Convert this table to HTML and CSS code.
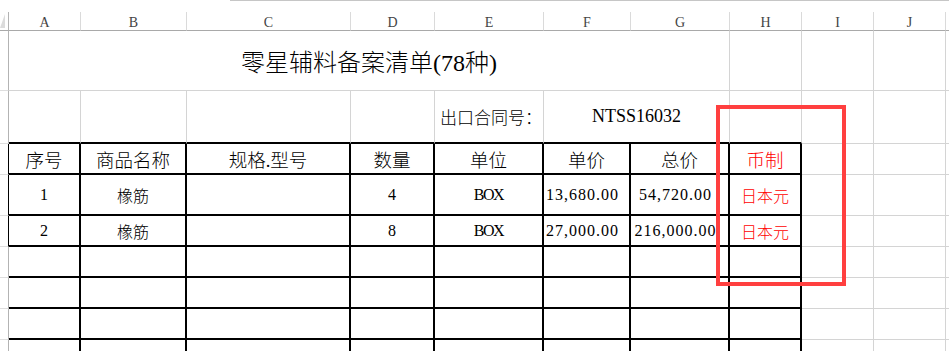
FILE: index.html
```html
<!DOCTYPE html>
<html lang="zh-CN">
<head>
<meta charset="utf-8">
<title>零星辅料备案清单</title>
<link rel="stylesheet" href="styles.css">
</head>
<body>
<div class="topbar"><div class="topbar-gap"></div><div class="topbar-edge"></div></div>
<div class="sheet">
  <!-- column letters -->
  <div class="corner"><span class="corner-tri"></span></div>
  <div class="colhead">A</div>
  <div class="colhead">B</div>
  <div class="colhead">C</div>
  <div class="colhead">D</div>
  <div class="colhead">E</div>
  <div class="colhead">F</div>
  <div class="colhead">G</div>
  <div class="colhead">H</div>
  <div class="colhead">I</div>
  <div class="colhead">J</div>
  <div class="colhead last"></div>

  <!-- row 1: title -->
  <div class="rowhead"></div>
  <div class="cell title">零星辅料备案清单(78种)</div>
  <div class="cell"></div>
  <div class="cell"></div>
  <div class="cell"></div>
  <div class="cell last"></div>

  <!-- row 2: contract number -->
  <div class="rowhead"></div>
  <div class="cell top-edge"></div>
  <div class="cell top-edge"></div>
  <div class="cell top-edge"></div>
  <div class="cell top-edge"></div>
  <div class="cell top-edge label">出口合同号：</div>
  <div class="cell top-edge pair contract">NTSS16032</div>
  <div class="cell top-edge"></div>
  <div class="cell"></div>
  <div class="cell"></div>
  <div class="cell last"></div>

  <!-- row 3: table header -->
  <div class="rowhead dark"></div>
  <div class="cell tb head">序号</div>
  <div class="cell tb head">商品名称</div>
  <div class="cell tb head">规格.型号</div>
  <div class="cell tb head">数量</div>
  <div class="cell tb head">单位</div>
  <div class="cell tb head">单价</div>
  <div class="cell tb head">总价</div>
  <div class="cell tb head red">币制</div>
  <div class="cell"></div>
  <div class="cell"></div>
  <div class="cell last"></div>

  <!-- row 4 -->
  <div class="rowhead dark"></div>
  <div class="cell tb data">1</div>
  <div class="cell tb data">橡筋</div>
  <div class="cell tb data"></div>
  <div class="cell tb data">4</div>
  <div class="cell tb data unit">BOX</div>
  <div class="cell tb data num">13,680.00</div>
  <div class="cell tb data num">54,720.00</div>
  <div class="cell tb data red">日本元</div>
  <div class="cell"></div>
  <div class="cell"></div>
  <div class="cell last"></div>

  <!-- row 5 -->
  <div class="rowhead dark"></div>
  <div class="cell tb data">2</div>
  <div class="cell tb data">橡筋</div>
  <div class="cell tb data"></div>
  <div class="cell tb data">8</div>
  <div class="cell tb data unit">BOX</div>
  <div class="cell tb data num">27,000.00</div>
  <div class="cell tb data num">216,000.00</div>
  <div class="cell tb data red">日本元</div>
  <div class="cell"></div>
  <div class="cell"></div>
  <div class="cell last"></div>

  <!-- rows 6-8: empty ruled lines -->
  <div class="rowhead"></div>
  <div class="cell tb"></div><div class="cell tb"></div><div class="cell tb"></div><div class="cell tb"></div>
  <div class="cell tb"></div><div class="cell tb"></div><div class="cell tb"></div><div class="cell tb"></div>
  <div class="cell"></div><div class="cell"></div><div class="cell last"></div>

  <div class="rowhead"></div>
  <div class="cell tb"></div><div class="cell tb"></div><div class="cell tb"></div><div class="cell tb"></div>
  <div class="cell tb"></div><div class="cell tb"></div><div class="cell tb"></div><div class="cell tb"></div>
  <div class="cell"></div><div class="cell"></div><div class="cell last"></div>

  <div class="rowhead"></div>
  <div class="cell tb"></div><div class="cell tb"></div><div class="cell tb"></div><div class="cell tb"></div>
  <div class="cell tb"></div><div class="cell tb"></div><div class="cell tb"></div><div class="cell tb"></div>
  <div class="cell"></div><div class="cell"></div><div class="cell last"></div>

  <!-- row 9: top sliver of the next ruled line -->
  <div class="rowhead open"></div>
  <div class="cell tb open"></div><div class="cell tb open"></div><div class="cell tb open"></div><div class="cell tb open"></div>
  <div class="cell tb open"></div><div class="cell tb open"></div><div class="cell tb open"></div><div class="cell tb open"></div>
  <div class="cell open"></div><div class="cell open"></div><div class="cell last open"></div>
</div>

<!-- highlight frame drawn over the currency column -->
<div class="mark"></div>
</body>
</html>
```

FILE: styles.css
```css
html, body {
  margin: 0;
  padding: 0;
}

body {
  position: relative;
  width: 949px;
  height: 351px;
  overflow: hidden;
  background: #fff;
  color: #000;
  font-family: "Liberation Serif", "Noto Sans CJK SC", serif;
  font-weight: 300;
}

/* strip above the column letters */
.topbar {
  display: flex;
  height: 12px;
}

.topbar-gap {
  width: 230px;
}

.topbar-edge {
  flex: 1;
  border-top: 1px solid #c6c6c6;
}

/* spreadsheet grid */
.sheet {
  display: grid;
  grid-template-columns: 9px 72px 106px 164px 84px 109px 87px 99px 72px 72px 72px 1fr;
  grid-template-rows: 19px 60px 53px 31px 41px 31px 31px 31px 31px 11px;
}

.sheet > div {
  box-sizing: border-box;
  display: flex;
  align-items: center;
  justify-content: center;
  min-width: 0;
  white-space: nowrap;
}

.corner {
  justify-content: flex-start !important;
  border-right: 1px solid #b3b3b3;
  border-bottom: 1px solid #a9a9a9;
}

.corner-tri {
  width: 5px;
  height: 14px;
  background: #dcdcdc;
  clip-path: polygon(100% 0, 100% 100%, 0 100%);
}

.colhead {
  padding-top: 3px;
  border-right: 1px solid #dadada;
  border-bottom: 1px solid #a9a9a9;
  font-size: 14px;
  color: #444;
}

.rowhead {
  border-right: 1px solid #b3b3b3;
  border-bottom: 1px solid #dedede;
}

.rowhead.dark {
  border-right-color: #000;
}

.cell {
  border-right: 1px solid #d4d4d4;
  border-bottom: 1px solid #d4d4d4;
}

.cell.top-edge {
  border-bottom: 2px solid #000;
}

.cell.tb {
  border-right: 2px solid #000;
  border-bottom: 2px solid #000;
}

.last {
  border-right: none !important;
}

.open {
  border-bottom: none !important;
}

.title {
  grid-column: span 7;
  font-size: 24px;
}

.pair {
  grid-column: span 2;
}

.label {
  justify-content: flex-end !important;
  padding-right: 1px;
  font-size: 17px;
}

.contract {
  font-size: 18px;
}

.head {
  font-size: 18.5px;
}

.data {
  font-size: 16px;
}

.num {
  padding-right: 8px;
  letter-spacing: 1px;
}

.unit {
  letter-spacing: -1.5px;
}

.red {
  color: #f00;
}

.mark {
  position: absolute;
  left: 716px;
  top: 105px;
  width: 130px;
  height: 181px;
  box-sizing: border-box;
  border: 4px solid #ff3f3f;
}
```
